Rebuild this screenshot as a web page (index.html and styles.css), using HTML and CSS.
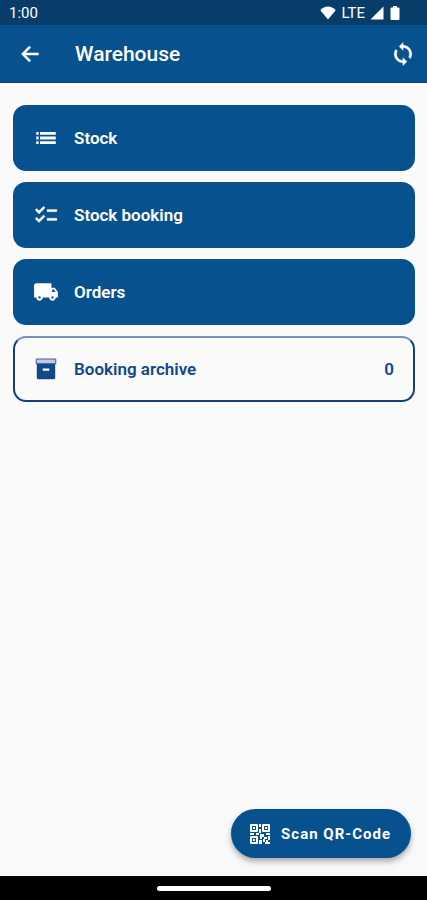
FILE: index.html
```html
<!DOCTYPE html>
<html lang="en">
<head>
<meta charset="utf-8">
<meta name="viewport" content="width=device-width, initial-scale=1">
<title>Warehouse</title>
<link rel="stylesheet" href="styles.css">
</head>
<body>
<div class="status-bar">
  <span>1:00</span>
  <div class="status-icons">
    <svg width="16" height="14" viewBox="0 0 16 14"><path d="M8 13.500L0.300 4.200C2.500 1.700 5 .5 8 .5s5.500 1.200 7.700 3.700z"/></svg>
    <span>LTE</span>
    <svg width="14" height="14" viewBox="0 0 14 14"><path d="M13.500.5v13H.5z"/></svg>
    <svg class="battery" width="10" height="14" viewBox="0 0 10 14"><path d="M3 0h4v1.500h1.500q1 0 1 1V13q0 1-1 1h-7q-1 0-1-1V2.500q0-1 1-1H3z"/></svg>
  </div>
</div>
<header class="app-bar">
  <button class="icon-button" aria-label="Back">
    <svg width="26" height="26" viewBox="0 0 24 24"><path stroke="currentColor" stroke-width=".4" d="M19.800 11H7.830l4.890-4.890L11.300 4.700 4 12l7.300 7.300 1.410-1.410L7.830 13H19.800z"/></svg>
  </button>
  <h1>Warehouse</h1>
  <button class="icon-button" aria-label="Refresh">
    <svg width="26" height="26" viewBox="0 0 24 24"><path stroke="currentColor" stroke-width=".5" d="M12 4V1.500L8.500 5l3.500 3.500V6c3.310 0 6 2.690 6 6 0 1.010-.25 1.970-.7 2.800l1.460 1.460C19.540 15.030 20 13.570 20 12c0-4.420-3.580-8-8-8zm0 14c-3.310 0-6-2.690-6-6 0-1.010.25-1.970.7-2.800L5.240 7.740C4.460 8.970 4 10.430 4 12c0 4.420 3.580 8 8 8v2.500l3.500-3.500-3.500-3.500z"/></svg>
  </button>
</header>
<main>
  <nav class="menu" aria-label="Warehouse">
    <a class="card" href="#stock">
      <svg width="26" height="26" viewBox="0 0 24 24"><path d="M3 13.300h2.200v-2.600H3zm0 4.200h2.200v-2.600H3zM3 9.100h2.200V6.500H3zm3.500 4.200H21v-2.600H6.500zm0 4.200H21v-2.600H6.500zm0-11v2.600H21V6.500z"/></svg>
      <span>Stock</span>
    </a>
    <a class="card" href="#booking">
      <svg width="26" height="26" viewBox="0 0 24 24"><path stroke="currentColor" stroke-width=".3" d="M22 7h-9v2h9zm0 8h-9v2h9zM5.540 11L2 7.460l1.410-1.410 2.120 2.120 4.240-4.240 1.410 1.410zm0 8L2 15.460l1.410-1.410 2.120 2.120 4.240-4.240 1.410 1.410z"/></svg>
      <span>Stock booking</span>
    </a>
    <a class="card" href="#orders">
      <svg width="26" height="26" viewBox="0 0 24 24"><path d="M20 8h-3V4H3c-1.100 0-2 .9-2 2v11h2c0 1.660 1.340 3 3 3s3-1.340 3-3h6c0 1.660 1.340 3 3 3s3-1.340 3-3h2v-5zM6 18.100a1.100 1.100 0 1 1 0-2.200 1.100 1.100 0 0 1 0 2.200zm13.300-8.300l1.600 2.200H17.700V9.800zM18 18.100a1.100 1.100 0 1 1 0-2.200 1.100 1.100 0 0 1 0 2.200z"/></svg>
      <span>Orders</span>
    </a>
    <a class="card card-outlined" href="#archive">
      <svg width="26" height="26" viewBox="0 0 24 24"><path fill="#c3cadb" stroke="#435f96" d="M3.500 2.700h17q.5 0 .5.5v3.500q0 .5-.5.5h-17q-.5 0-.5-.5V3.200q0-.5.5-.5z"/><path d="M3.500 7.200h17v12.800q0 1.500-1.500 1.500H5q-1.500 0-1.500-1.500zM9 11.500v2h6v-2z" fill-rule="evenodd"/></svg>
      <span>Booking archive</span>
      <span class="count">0</span>
    </a>
  </nav>
  <button class="scan-button">
    <svg width="22" height="22" viewBox="0 0 22 22"><path fill-rule="evenodd" d="M2 1h6q1 0 1 1v6q0 1-1 1H2Q1 9 1 8V2q0-1 1-1zm1 2v4h4V3zM14 1h6q1 0 1 1v6q0 1-1 1h-6q-1 0-1-1V2q0-1 1-1zm1 2v4h4V3zM2 13h6q1 0 1 1v6q0 1-1 1H2q-1 0-1-1v-6q0-1 1-1zm1 2v4h4v-4zM4 4h2v2H4zM16 4h2v2h-2zM4 16h2v2H4zM10 1h2v3h-2zM10 6h2v4h-2zM1 10h4v2H1zM7 10h3v2H7zM11 11h4v3h-2v2h-2zM17 10h4v2h-4zM15 14h3v2h-3zM19 13h2v4h-2zM10 17h3v4h-3zM14 16h2v3h-2zM17 17h2v2h2v2h-5v-2h1z"/></svg>
    <span>Scan QR-Code</span>
  </button>
</main>
<footer class="system-bar"><div class="home-pill"></div></footer>
</body>
</html>
```
FILE: styles.css
```css
* {
  box-sizing: border-box;
}

body {
  margin: 0;
  min-height: 100vh;
  display: flex;
  flex-direction: column;
  background: #fafafa;
  color: #fff;
  font-family: Roboto, "Liberation Sans", sans-serif;
}

svg {
  display: block;
  flex: none;
  fill: currentColor;
}

button {
  border: 0;
  color: inherit;
  font: inherit;
  cursor: pointer;
}

.status-bar {
  display: flex;
  align-items: center;
  justify-content: space-between;
  height: 25px;
  padding: 1px 27px 0 9px;
  background: #083d69;
  font-size: 15px;
  line-height: 20px;
}

.status-icons {
  display: flex;
  align-items: center;
  gap: 5px;
}

.battery {
  margin-left: 1px;
}

.app-bar {
  display: flex;
  align-items: center;
  height: 58px;
  padding: 1px 11px 0 17px;
  background: #08518f;
  border-bottom: 1px solid #063c80;
}

.app-bar h1 {
  flex: 1;
  margin: 0 0 0 32px;
  font-size: 21px;
  line-height: 28px;
  font-weight: 500;
}

.icon-button {
  padding: 0;
  background: none;
}

main {
  flex: 1;
  display: flex;
  flex-direction: column;
  justify-content: space-between;
  padding: 22px 12px 18px 13px;
}

.menu {
  display: flex;
  flex-direction: column;
  gap: 11px;
}

.card {
  display: flex;
  align-items: center;
  gap: 15px;
  height: 66px;
  padding: 0 19px 0 18px;
  border: 2px solid #08518f;
  border-radius: 13px;
  background: #08518f;
  color: #fff;
  font-size: 17px;
  line-height: 24px;
  font-weight: 600;
  text-decoration: none;
}

.card-outlined {
  border-color: #153d85;
  border-top-color: #7891b4;
  background: #fafafa;
  color: #124789;
}

.count {
  margin-left: auto;
}

.scan-button {
  display: flex;
  align-items: center;
  align-self: flex-end;
  gap: 10px;
  height: 49px;
  margin-right: 4px;
  padding: 0 20px 0 18px;
  border-radius: 25px;
  background: #08518f;
  box-shadow: 0 3px 5px rgba(0, 0, 0, 0.25), 0 5px 10px rgba(0, 0, 0, 0.1);
  font-size: 15px;
  line-height: 20px;
  font-weight: 700;
  letter-spacing: 1px;
}

.system-bar {
  display: flex;
  align-items: center;
  justify-content: center;
  height: 24px;
  background: #000;
}

.home-pill {
  width: 114px;
  height: 5px;
  border-radius: 3px;
  background: #fff;
}
```
